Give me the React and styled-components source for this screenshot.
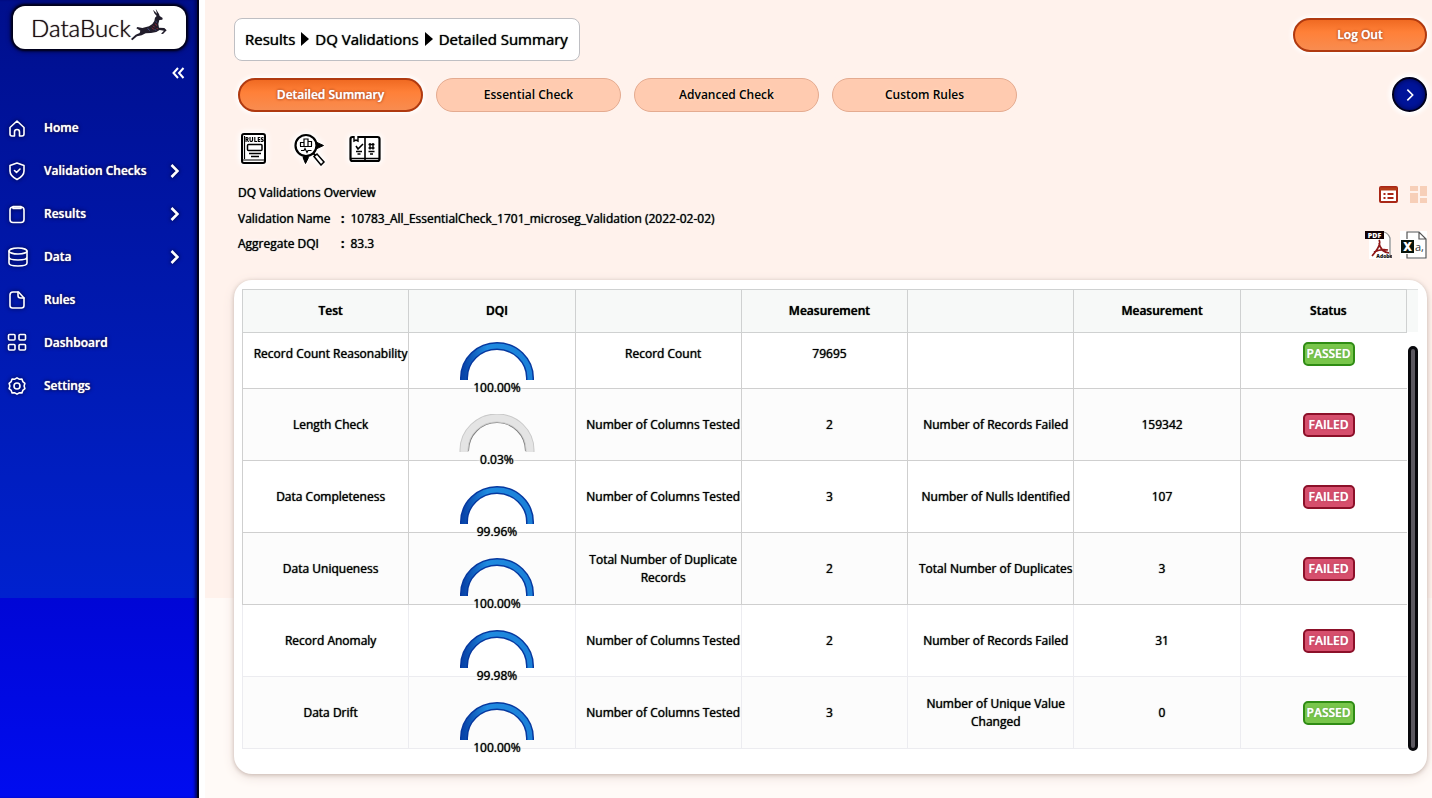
import styled, { createGlobalStyle } from "styled-components";

const GlobalStyle = createGlobalStyle`
  * {
    box-sizing: border-box;
  }

  body {
    margin: 0;
    background: #ffffff;
    color: #000000;
    font-family: "Open Sans", "Noto Sans", sans-serif;
    font-size: 12px;
    line-height: 18px;
  }

  a {
    color: inherit;
    text-decoration: none;
  }

  button {
    padding: 0;
    border: 0;
    background: none;
    color: inherit;
    font: inherit;
    cursor: pointer;
  }
`;

const halo = `
  text-shadow: 0 0 1px #000000, 0 0 2px #ffffff, 0 0 3px #ffffff, 0 0 4px #ffffff, 0 0 5px #ffffff;
`;

const Page = styled.div`
  display: flex;
  gap: 6px;
  min-height: 100vh;
`;

const Sidebar = styled.aside`
  flex: 0 0 199px;
  border-right: 2px solid #00001c;
  box-shadow: inset -3px 0 3px -1px #00055c;
  background: linear-gradient(
    #000f8c 0,
    #0014a0 22%,
    #001cb8 50%,
    #0021cf 75%,
    #0006d6 75%,
    #000cf0 100%
  );
  color: #ffffff;
`;

const Logo = styled.a`
  display: flex;
  align-items: center;
  height: 43px;
  margin: 6px 11px 0 13px;
  padding-left: 18px;
  border-radius: 12px;
  background: #ffffff;
  box-shadow: 0 0 2px 2px #00001a, 0 0 5px 2px #00043c;
  color: #1a0c10;
  font-family: Lato, sans-serif;
  font-size: 24px;
  font-weight: 300;
  text-shadow: 0 0 1px #1a0c10;

  svg {
    margin-bottom: 6px;
  }
`;

const CollapseRow = styled.div`
  display: flex;
  justify-content: flex-end;
  height: 57px;
  padding: 17px 11px 0 0;
`;

const CollapseButton = styled.button`
  width: 16px;
  height: 16px;
`;

const Nav = styled.nav`
  display: flex;
  flex-direction: column;
`;

const NavItem = styled.a`
  display: flex;
  align-items: center;
  gap: 17px;
  height: 43px;
  padding: 0 18px 0 7px;
  font-size: 12px;
  font-weight: 600;
  text-shadow: 0 0 1px #ffffff, 0 0 2px #00002c, 0 0 4px #00002c;

  svg {
    filter: drop-shadow(0 0 2px #00002c);
  }

  span {
    flex: 1;
  }
`;

const Main = styled.main`
  flex: 1;
  min-width: 0;
  padding: 18px 5px 24px 29px;
  background: linear-gradient(#fff2ec 0, #fff2ec 75%, #fffaf7 75%, #fffaf7 100%);
`;

const TopRow = styled.div`
  display: flex;
  justify-content: space-between;
  align-items: flex-start;
`;

const Breadcrumb = styled.nav`
  display: flex;
  align-items: center;
  gap: 6px;
  height: 43px;
  padding: 0 11px 2px 10px;
  border: 1px solid #bfbfc3;
  border-radius: 8px;
  background: #ffffff;
  font-size: 15px;
  font-weight: 500;
  text-shadow: 0 0 1px #000000;
`;

const PillButton = styled.button`
  width: ${({ $width }) => $width}px;
  height: 34px;
  border: ${({ $active }) => ($active ? "2px solid #b03a10" : "1px solid #e4ab90")};
  border-radius: 17px;
  background: ${({ $active }) =>
    $active ? "linear-gradient(#f06a22, #ff8038 40%, #f88c50)" : "#ffcbb0"};
  box-shadow: 0 0 4px 2px ${({ $active }) => ($active ? "#ffffff" : "#fff2ec")};
  color: ${({ $active }) => ($active ? "#ffffff" : "#000000")};
  font-weight: 600;
  text-shadow: ${({ $active }) =>
    $active
      ? "0 0 1px #ffffff, 0 0 2px #a03408, 0 0 3px #a03408"
      : "0 0 3px #ffe8c8"};
`;

const TabRow = styled.div`
  display: flex;
  align-items: center;
  gap: 13px;
  margin-top: 16px;
  padding-left: 4px;
`;

const NextButton = styled.button`
  display: flex;
  align-items: center;
  justify-content: center;
  width: 35px;
  height: 35px;
  margin-left: auto;
  border: 2px solid #00001c;
  border-radius: 50%;
  background: #001499;
  box-shadow: inset 0 0 5px #000448, 0 0 4px 3px #ffffff;
  color: #ffffff;
`;

const ToolRow = styled.div`
  display: flex;
  gap: 22px;
  margin-top: 20px;
  padding-left: 2px;
`;

const ToolButton = styled.button`
  width: 34px;
  height: 34px;
  border-radius: 8px;
  filter: drop-shadow(0 0 3px #ffffff) drop-shadow(0 0 2px #ffffff);
`;

const Overview = styled.section`
  display: flex;
  justify-content: space-between;
  margin: 18px 0 21px;
  padding-left: 4px;
  font-weight: 500;
  ${halo}
`;

const OverviewTitle = styled.h1`
  margin: 0 0 8px;
  font-size: 12px;
  font-weight: 500;
`;

const Facts = styled.dl`
  display: grid;
  grid-template-columns: 103px auto;
  gap: 7px 0;
  margin: 0;

  dd {
    display: flex;
    gap: 6px;
    margin: 0;
  }
`;

const ExportColumn = styled.div`
  display: flex;
  flex-direction: column;
  align-items: flex-end;
  gap: 28px;
  padding-top: 2px;
`;

const IconRow = styled.div`
  display: flex;
  gap: ${({ $gap }) => $gap}px;

  button {
    display: flex;
  }
`;

const Card = styled.section`
  display: flex;
  padding: 9px 9px 25px 8px;
  border-radius: 18px;
  background: #ffffff;
  box-shadow: 0 1px 4px #c9b8b1, 0 3px 12px #eadfda;
`;

const ResultTable = styled.table`
  flex: 1;
  width: 100%;
  table-layout: fixed;
  border-collapse: collapse;
  text-align: center;
`;

const HeadCell = styled.th`
  height: 43px;
  padding: 0 0 0 10px;
  border: 1px solid #cfd1d1;
  background: #f7f9f8;
  font-weight: 600;
  ${halo}
`;

const Row = styled.tr`
  height: ${({ $clipped }) => ($clipped ? 56 : 72)}px;
  background: ${({ $shaded }) => ($shaded ? "#fcfcfc" : "#ffffff")};

  td {
    padding: 0 0 ${({ $clipped }) => ($clipped ? 14 : 0)}px 10px;
    border: 1px solid ${({ $faded }) => ($faded ? "#ececf0" : "#cfcfcf")};
    font-weight: 400;
    ${halo}
  }

  td:last-child {
    border-right: 0;
  }

  td.gauge {
    padding: 0 0 0 10px;
    vertical-align: bottom;
  }
`;

const Gauge = styled.div`
  display: flex;
  flex-direction: column;
  align-items: center;
  margin-bottom: -9px;

  svg {
    margin-bottom: -2px;
  }
`;

const Badge = styled.span`
  display: inline-block;
  width: 52px;
  height: 24px;
  border: 2px solid ${({ $passed }) => ($passed ? "#2f8c14" : "#8c1029")};
  border-radius: 5px;
  background: ${({ $passed }) => ($passed ? "#79c64b" : "#d64f6d")};
  color: #ffffff;
  font-weight: 600;
  line-height: 20px;
  text-shadow: 0 0 1px #ffffff, 0 0 2px ${({ $passed }) => ($passed ? "#3a8c1c" : "#9c1734")};
`;

const Gutter = styled.div`
  display: flex;
  flex-direction: column;
  flex: 0 0 11px;
`;

const GutterHead = styled.div`
  height: 43px;
  margin-bottom: 14px;
  border-top: 1px solid #dfe1e1;
  background: #f7f9f8;
`;

const ScrollThumb = styled.div`
  flex: 1;
  margin: 0 0 -2px 1px;
  border: 3px solid #08080c;
  border-radius: 5px;
  background: #5b5860;
`;

const navIcons = {
  home: (
    <>
      <path d="M3 9.500 10 3l7 6.500V16a2 2 0 0 1-2 2h-2.500v-4a2.500 2.500 0 0 0-5 0v4H5a2 2 0 0 1-2-2z" />
    </>
  ),
  shield: (
    <>
      <path d="M10 2 17 4.500V10c0 4-3 6.500-7 8.500C6 16.500 3 14 3 10V4.500z" />
      <path d="m7.500 9.500 2 2 3.500-3.500" />
    </>
  ),
  clipboard: (
    <>
      <rect x="3" y="3" width="14" height="15.500" rx="3" />
      <path d="M6 2.500h8v2H6z" />
    </>
  ),
  database: (
    <>
      <ellipse cx="11" cy="4" rx="9" ry="3" />
      <path d="M2 4v12c0 4 18 4 18 0V4M2 10c0 4 18 4 18 0" />
    </>
  ),
  file: (
    <>
      <path d="M6 2h5.500L17 8v7.500a2.500 2.500 0 0 1-2.500 2.500h-9A2.500 2.500 0 0 1 3 15.500V5a3 3 0 0 1 3-3z" />
      <path d="M11 2v3.500A2.500 2.500 0 0 0 13.500 8H17" />
    </>
  ),
  grid: (
    <>
      <rect x="1.500" y="1.500" width="6.500" height="5.500" rx="1" />
      <rect x="12" y="1.500" width="6.500" height="5.500" rx="1" />
      <rect x="1.500" y="11.500" width="6.500" height="5.500" rx="1" />
      <rect x="12" y="11.500" width="6.500" height="5.500" rx="1" />
    </>
  ),
  gear: (
    <>
      <path d="m10 1.800 2.200 1.400 2.700-.1.900 2.500 2.100 1.700-.8 2.700.8 2.700-2.100 1.700-.9 2.500-2.700-.1L10 18.200l-2.200-1.400-2.700.1-.9-2.500-2.100-1.700.8-2.700-.8-2.700 2.100-1.700.9-2.500 2.700.1z" />
      <circle cx="10" cy="10" r="3" />
    </>
  ),
};

const NavIcon = ({ name }) => (
  <svg
    width="20"
    height="20"
    viewBox="0 0 20 20"
    fill="none"
    stroke="currentColor"
    strokeWidth="1.600"
    strokeLinejoin="round"
    strokeLinecap="round"
    overflow="visible"
  >
    {navIcons[name]}
  </svg>
);

const Chevron = ({ width = 9, strokeWidth = 2.6 }) => (
  <svg width={width} height="14" viewBox="0 0 9 14" fill="none">
    <path d="m1.500 1 6 6-6 6" stroke="currentColor" strokeWidth={strokeWidth} />
  </svg>
);

const Triangle = () => (
  <svg width="8" height="14" viewBox="0 0 8 14">
    <path d="M0 0 8 7 0 14z" />
  </svg>
);

const BuckIcon = () => (
  <svg width="36" height="34" viewBox="0 0 108 102">
    <path
      d="M0 93 14 80 26 75 28 68 16 61 19 57 34 60 54 55 64 48 70 39 72 29 77 24 70 16 66 5 78 17 74 2 84 18 86 24 95 30 94 35 85 36 82 48 84 59 100 60 107 67 96 78 90 77 99 68 86 66 76 72 60 75 44 76 32 82 18 85 4 97z"
      fill="#211d2b"
    />
    <path d="m66 53 5 5m2-11 4 6m-14 6 6 6m8-5 3 3" stroke="#9b2736" strokeWidth="3" />
    <path d="m50 61 6 7m16-4 3 4m-1-27 4 2" stroke="#48508d" strokeWidth="3" />
  </svg>
);

const RulesIcon = () => (
  <svg width="34" height="34" viewBox="0 0 34 34" fill="none" stroke="#000000" strokeWidth="1.800">
    <rect x="6" y="2" width="23" height="29" rx="2" fill="#ffffff" strokeWidth="2" />
    <path d="M6 28h23M8.500 4v23" strokeWidth="1.200" />
    <text x="18.500" y="9.500" fontSize="6" fontWeight="800" textAnchor="middle" fill="#000000" stroke="none">
      RULES
    </text>
    <rect x="11.500" y="12.500" width="14.500" height="6" rx="1" strokeWidth="1.500" />
    <path d="M13 21.500h12M15 24.500h8" strokeWidth="1.500" />
  </svg>
);

const AnalysisIcon = () => (
  <svg width="34" height="34" viewBox="0 0 34 34" fill="none" stroke="#000000" strokeWidth="1.500">
    <circle cx="14" cy="13.500" r="10.500" fill="#ffffff" strokeWidth="2.200" />
    <path d="M8.500 14v-3.500h3.500V14m0 0V7h4v7m0 0V9.500h3.500V14M8 14.500h12" strokeWidth="1.200" />
    <path d="M9 18.500h3l1-2 2 4 1-2h3.500" strokeWidth="1.200" />
    <path d="m25 10.500 6.500 3-6.500 3zM11 25.500l2.500 6 3-6z" fill="#000000" strokeWidth="1" />
    <path d="m22 24.500 3-2.500 7 8-3 3z" fill="#ffffff" />
    <path d="m21 21 2.500 2.500" strokeWidth="2" />
  </svg>
);

const ChecklistIcon = () => (
  <svg width="34" height="34" viewBox="0 0 34 34" fill="none" stroke="#000000" strokeWidth="1.800">
    <rect x="2.500" y="5" width="29" height="24" rx="2" fill="#ffffff" strokeWidth="2.200" />
    <path d="M17 5v24M2 26.500h30" strokeWidth="1.600" />
    <path d="M6 4v5l2-1 2 1V4" fill="#ffffff" strokeWidth="1.400" />
    <path d="m8 14 2 3 5-5M8 19.500h6M9.500 22h3M20.500 19.500h6M22 22h3" strokeWidth="1.600" />
    <path d="M20.500 12.500h6m-6 3.500h6m-4.500-5v6.500m3-6.500v6.500" strokeWidth="1.400" />
  </svg>
);

const ListViewIcon = () => (
  <svg width="19" height="17" viewBox="0 0 19 17" fill="none">
    <rect x="1" y="1" width="17" height="15" rx="1" fill="#ffffff" stroke="#a92716" strokeWidth="2" />
    <path d="M1 3h17" stroke="#b53c18" strokeWidth="3" />
    <path d="M4.500 8h2m2 0h6m-10 4h2m2 0h6" stroke="#a92716" strokeWidth="2" />
  </svg>
);

const TileViewIcon = () => (
  <svg width="17" height="17" viewBox="0 0 17 17" fill="#f7cfb8">
    <path d="M0 0h8v5H0zM0 7h8v10H0zM10 0h7v10h-7zM10 12h7v5h-7z" />
  </svg>
);

const PdfIcon = () => (
  <svg width="27" height="28" viewBox="0 0 27 28">
    <path d="M4 0h16l6 7v21H4z" fill="#ffffff" />
    <path d="M19 1c3 1 5 3 6 6v20" fill="none" stroke="#8d8d8d" strokeWidth="1.300" />
    <path d="M0 0h19v8H0z" fill="#120204" />
    <text x="9.500" y="6.500" fontSize="7" fontWeight="800" textAnchor="middle" fill="#ffffff">
      PDF
    </text>
    <path
      d="M14 9c2 3 0 8-7 16m7-13c1 6 4 9 10 10M9 21c4-2 9-3 14-2"
      fill="none"
      stroke="#8e1818"
      strokeWidth="1.700"
    />
    <text x="19.500" y="27" fontSize="5" fontWeight="800" textAnchor="middle" fill="#101010">
      Adobe
    </text>
  </svg>
);

const SheetIcon = () => (
  <svg width="27" height="28" viewBox="0 0 27 28">
    <path d="M0 0h27v28H0z" fill="#ffffff" />
    <path d="M7 8V1h12l7 7v19H7v-4M19 1v7h7" fill="none" stroke="#555555" strokeWidth="1.200" />
    <path d="M1 9h13v13H1z" fill="#08160e" />
    <text x="7.500" y="19.500" fontSize="12" fontWeight="800" textAnchor="middle" fill="#ffffff">
      X
    </text>
    <text x="15" y="20" fontSize="11" fill="#333333">
      a,
    </text>
  </svg>
);

const ARC = "M5 38V36A33 32 0 0 1 71 36V38";

const DqiGauge = ({ value, empty }) => (
  <Gauge>
    <svg width="76" height="39" viewBox="0 0 76 39" fill="none">
      <defs>
        <linearGradient id="gaugeFill" x1="0" x2="1" y1="0" y2="0">
          <stop offset="0" stopColor="#0845aa" />
          <stop offset="0.350" stopColor="#1f8be0" />
          <stop offset="1" stopColor="#1b80d8" />
        </linearGradient>
      </defs>
      {empty ? (
        <>
          <path d="M9 37A29 29 0 0 1 67 37" stroke="#777777" strokeWidth="2" />
          <path d={ARC} stroke="#c9c9c9" strokeWidth="9" />
          <path d={ARC} stroke="#e4e4e4" strokeWidth="7" />
        </>
      ) : (
        <>
          <path d={ARC} stroke="#06389f" strokeWidth="8" />
          <path d={ARC} stroke="url(#gaugeFill)" strokeWidth="5" />
        </>
      )}
    </svg>
    <span>{value}</span>
  </Gauge>
);

const navItems = [
  { label: "Home", icon: "home" },
  { label: "Validation Checks", icon: "shield", expandable: true },
  { label: "Results", icon: "clipboard", expandable: true },
  { label: "Data", icon: "database", expandable: true },
  { label: "Rules", icon: "file" },
  { label: "Dashboard", icon: "grid" },
  { label: "Settings", icon: "gear" },
];

const tabs = ["Detailed Summary", "Essential Check", "Advanced Check", "Custom Rules"];

const headings = ["Test", "DQI", "", "Measurement", "", "Measurement", "Status"];

const results = [
  ["Record Count Reasonability", "100.00%", "Record Count", "79695", "", "", true],
  ["Length Check", "0.03%", "Number of Columns Tested", "2", "Number of Records Failed", "159342", false],
  ["Data Completeness", "99.96%", "Number of Columns Tested", "3", "Number of Nulls Identified", "107", false],
  ["Data Uniqueness", "100.00%", "Total Number of Duplicate Records", "2", "Total Number of Duplicates", "3", false],
  ["Record Anomaly", "99.98%", "Number of Columns Tested", "2", "Number of Records Failed", "31", false],
  ["Data Drift", "100.00%", "Number of Columns Tested", "3", "Number of Unique Value Changed", "0", true],
];

export default function App() {
  return (
    <>
      <GlobalStyle />
      <Page>
        <Sidebar>
          <Logo href="#home">
            DataBuck
            <BuckIcon />
          </Logo>
          <CollapseRow>
            <CollapseButton aria-label="Collapse menu">
              <svg width="14" height="14" viewBox="0 0 14 14" fill="none">
                <path d="M7 2 2.500 7 7 12M12.500 2 8 7l4.500 5" stroke="#ffffff" strokeWidth="2" />
              </svg>
            </CollapseButton>
          </CollapseRow>
          <Nav>
            {navItems.map((item) => (
              <NavItem key={item.label} href="#menu">
                <NavIcon name={item.icon} />
                <span>{item.label}</span>
                {item.expandable && <Chevron />}
              </NavItem>
            ))}
          </Nav>
        </Sidebar>
        <Main>
          <TopRow>
            <Breadcrumb>
              <a href="#results">Results</a>
              <Triangle />
              <a href="#validations">DQ Validations</a>
              <Triangle />
              <a href="#summary">Detailed Summary</a>
            </Breadcrumb>
            <PillButton $active $width={134}>
              Log Out
            </PillButton>
          </TopRow>
          <TabRow>
            {tabs.map((tab, index) => (
              <PillButton key={tab} $active={index === 0} $width={185}>
                {tab}
              </PillButton>
            ))}
            <NextButton aria-label="Next tabs">
              <Chevron width={8} strokeWidth={1.8} />
            </NextButton>
          </TabRow>
          <ToolRow>
            <ToolButton aria-label="Rules">
              <RulesIcon />
            </ToolButton>
            <ToolButton aria-label="Analysis">
              <AnalysisIcon />
            </ToolButton>
            <ToolButton aria-label="Checklist">
              <ChecklistIcon />
            </ToolButton>
          </ToolRow>
          <Overview>
            <div>
              <OverviewTitle>DQ Validations Overview</OverviewTitle>
              <Facts>
                <dt>Validation Name</dt>
                <dd>
                  <b>:</b> 10783_All_EssentialCheck_1701_microseg_Validation (2022-02-02)
                </dd>
                <dt>Aggregate DQI</dt>
                <dd>
                  <b>:</b> 83.3
                </dd>
              </Facts>
            </div>
            <ExportColumn>
              <IconRow $gap={12}>
                <button aria-label="List view">
                  <ListViewIcon />
                </button>
                <button aria-label="Tile view">
                  <TileViewIcon />
                </button>
              </IconRow>
              <IconRow $gap={8}>
                <button aria-label="Export PDF">
                  <PdfIcon />
                </button>
                <button aria-label="Export sheet">
                  <SheetIcon />
                </button>
              </IconRow>
            </ExportColumn>
          </Overview>
          <Card>
            <ResultTable>
              <thead>
                <tr>
                  {headings.map((heading, index) => (
                    <HeadCell key={index}>{heading}</HeadCell>
                  ))}
                </tr>
              </thead>
              <tbody>
                {results.map(([test, dqi, first, firstValue, second, secondValue, passed], index) => (
                  <Row key={test} $clipped={index === 0} $shaded={index % 2 === 1} $faded={index > 3}>
                    <td>{test}</td>
                    <td className="gauge">
                      <DqiGauge value={dqi} empty={dqi === "0.03%"} />
                    </td>
                    <td>{first}</td>
                    <td>{firstValue}</td>
                    <td>{second}</td>
                    <td>{secondValue}</td>
                    <td>
                      <Badge $passed={passed}>{passed ? "PASSED" : "FAILED"}</Badge>
                    </td>
                  </Row>
                ))}
              </tbody>
            </ResultTable>
            <Gutter>
              <GutterHead />
              <ScrollThumb />
            </Gutter>
          </Card>
        </Main>
      </Page>
    </>
  );
}
